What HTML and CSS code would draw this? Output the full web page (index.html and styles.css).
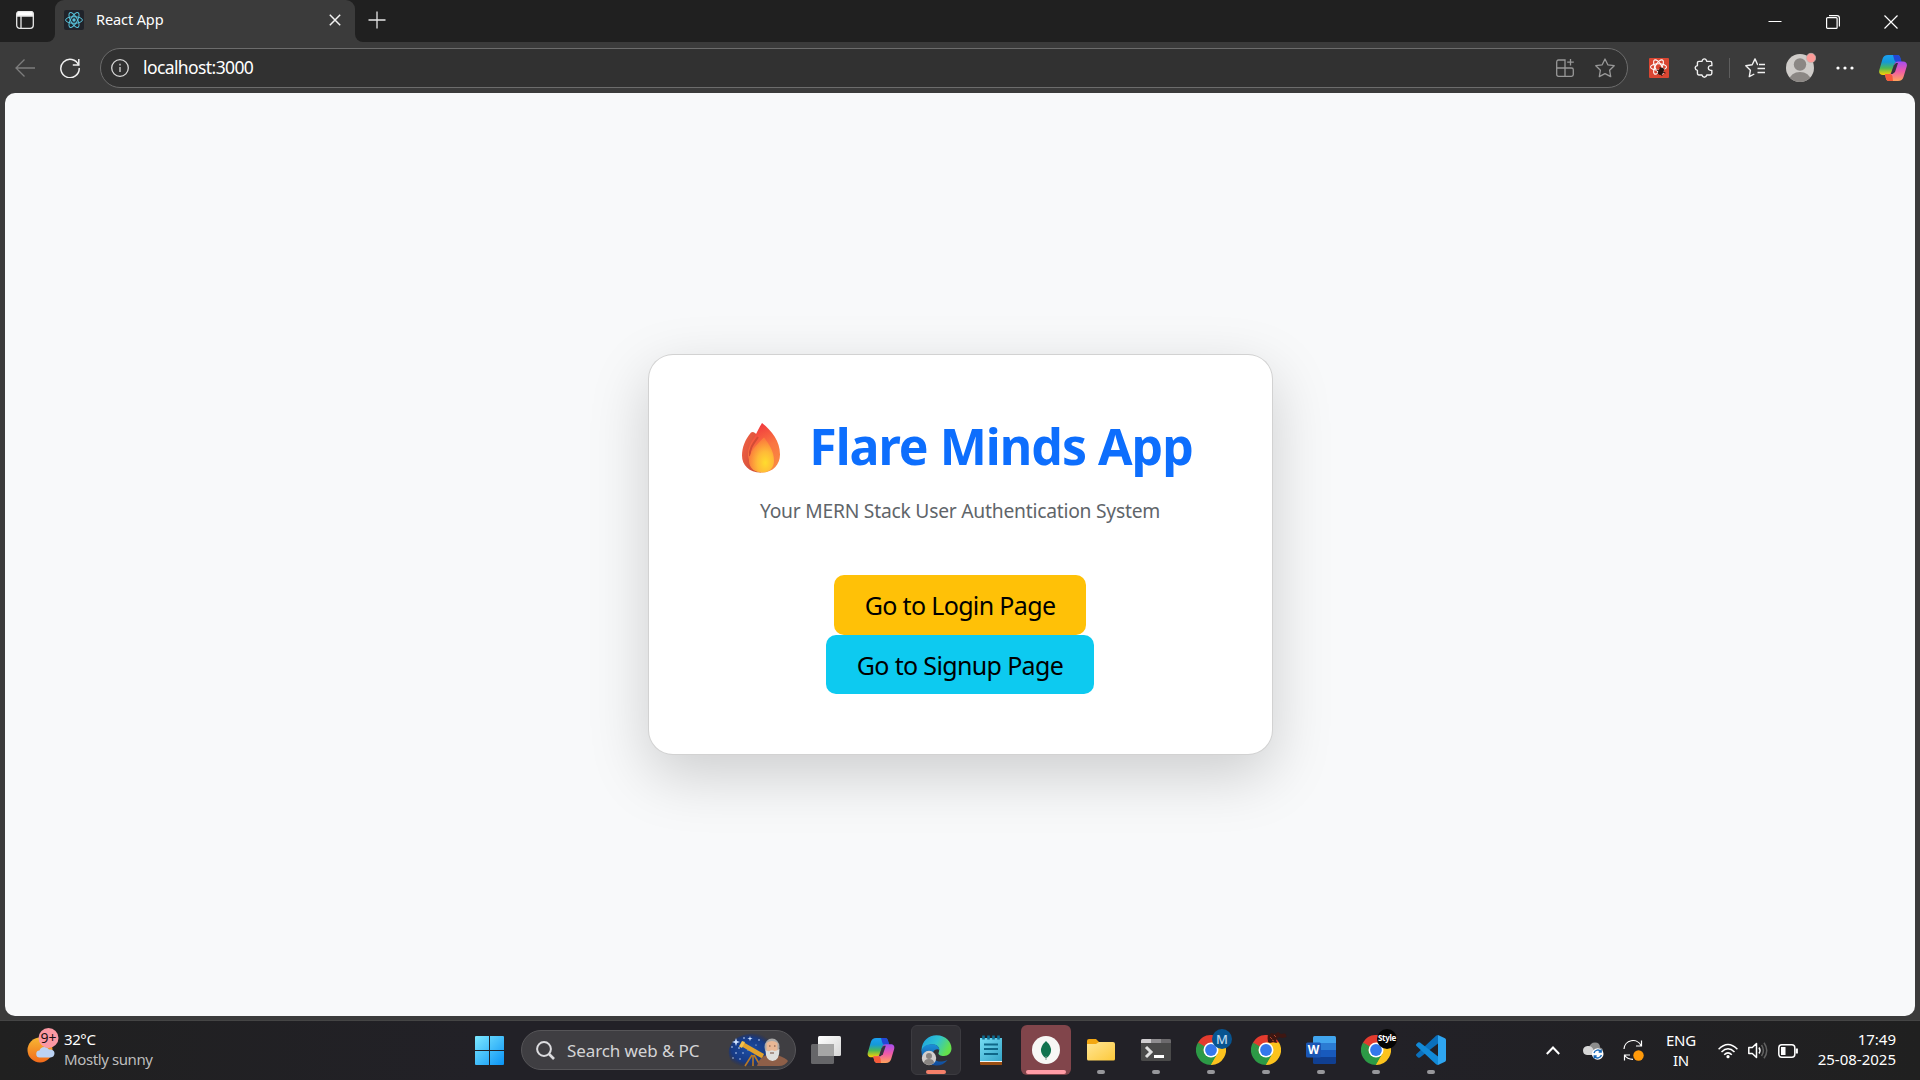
FILE: index.html
```html
<!DOCTYPE html>
<html lang="en">
<head>
<meta charset="utf-8">
<title>React App</title>
<link rel="stylesheet" href="styles.css">
</head>
<body>
<svg class="defs" width="0" height="0" aria-hidden="true">
  <defs>
    <linearGradient id="cpA" x1="0" y1="0" x2="0" y2="1"><stop offset="0" stop-color="#1ba0f2"/><stop offset=".35" stop-color="#1599d8"/><stop offset=".65" stop-color="#4cb857"/><stop offset="1" stop-color="#ffd000"/></linearGradient>
    <linearGradient id="cpB" x1="0" y1="0" x2="0" y2="1"><stop offset="0" stop-color="#a44df0"/><stop offset=".5" stop-color="#ef5aa8"/><stop offset="1" stop-color="#ffa45c"/></linearGradient>
    <linearGradient id="win" x1="0" y1="0" x2="1" y2="1"><stop offset="0" stop-color="#7ce8ff"/><stop offset="1" stop-color="#0a93f5"/></linearGradient>
    <linearGradient id="flameA" x1=".3" y1="0" x2=".6" y2="1"><stop offset="0" stop-color="#f0343f"/><stop offset=".5" stop-color="#fa7540"/><stop offset="1" stop-color="#f98b43"/></linearGradient>
    <linearGradient id="flameC" x1="0" y1="0" x2="1" y2=".6"><stop offset="0" stop-color="#f46245"/><stop offset="1" stop-color="#c94a35"/></linearGradient>
    <radialGradient id="flameB" cx=".65" cy=".72" r=".65"><stop offset="0" stop-color="#ffdc2e"/><stop offset=".5" stop-color="#ffb938"/><stop offset="1" stop-color="#fb7f3c"/></radialGradient>
    <linearGradient id="sun" x1="0" y1="0" x2="0" y2="1"><stop offset="0" stop-color="#f7b733"/><stop offset="1" stop-color="#f26a1b"/></linearGradient>
    <linearGradient id="edgeA" x1="0" y1="0" x2="1" y2=".4"><stop offset="0" stop-color="#1c9ee0"/><stop offset=".55" stop-color="#2fc3d2"/><stop offset="1" stop-color="#64e04c"/></linearGradient>
    <linearGradient id="edgeB" x1="0" y1="0" x2="0" y2="1"><stop offset="0" stop-color="#1b8fd8"/><stop offset="1" stop-color="#114a9a"/></linearGradient>
    <linearGradient id="folder" x1="0" y1="0" x2="1" y2="1"><stop offset="0" stop-color="#ffe696"/><stop offset="1" stop-color="#fdc93a"/></linearGradient>
    <linearGradient id="note" x1="0" y1="0" x2="1" y2="1"><stop offset="0" stop-color="#76dcf3"/><stop offset="1" stop-color="#35a5c8"/></linearGradient>
    <linearGradient id="taskA" x1="0" y1="0" x2="1" y2="1"><stop offset="0" stop-color="#fff"/><stop offset="1" stop-color="#d6d6d6"/></linearGradient>
    <radialGradient id="sky" cx=".45" cy=".5" r=".55"><stop offset="0" stop-color="#1c4da3"/><stop offset=".7" stop-color="#173a85"/><stop offset="1" stop-color="#1c2c63" stop-opacity="0"/></radialGradient>
    <symbol id="copilot" viewBox="0 0 28 26">
      <path d="M9 0h9c1.800 0 2.700 1.300 3.200 3l1 4h-3.500c-2 0-3.200 1.300-3.800 3.300l-2 6.700C12.300 19 11 20 9 20H4c-3 0-4.500-2-3.700-5L3.500 4C4.300 1.500 6 0 9 0z" fill="url(#cpA)"/>
      <path d="M14 0h4.500c1.700 0 2.500 1.300 3 3l1.200 4h-4c-2 0-3-.6-3.500-2.500z" fill="#2347d6"/>
      <path d="M19 26h-9c-1.800 0-2.700-1.300-3.200-3L6 19h3.500c2 0 3.200-1.300 3.800-3.300l2-6.200C16 7.500 17 6.500 19 6.500h5c3 0 4.500 2 3.700 5L24.500 22c-.8 2.500-2.500 4-5.500 4z" fill="url(#cpB)"/>
      <path d="M14 26h-4c-1.800 0-2.700-1.300-3.200-3L6 19h4c2 0 3 .6 3.500 2.500z" fill="#f65a3a"/>
      <path d="M14.800 10.500 17 8h2l-3 9-2.500 2h-1.800z" fill="#35323f"/>
    </symbol>
    <symbol id="chrome" viewBox="0 0 30 30">
      <path d="M15 15 2 7.500A15 15 0 0 1 28 7.500z" fill="#e33b2e"/>
      <path d="M15 15 28 7.500A15 15 0 0 1 15 30z" fill="#fcc31e"/>
      <path d="M15 15v15A15 15 0 0 1 2 7.500z" fill="#2c9a46"/>
      <path d="M15 7.500h13L21.500 18.800z" fill="#fcc31e"/><path d="M8.500 18.800 2 7.500 15 7.500z" fill="#e33b2e"/><path d="M2 7.500 8.500 18.800 15 15z" fill="#2c9a46"/><path d="M21.500 18.800 15 30 12 21z" fill="#2c9a46"/><path d="M21.500 18.800 15 30l8-3z" fill="#fcc31e"/>
      <circle cx="15" cy="15" r="7.500" fill="#fff"/><circle cx="15" cy="15" r="5.900" fill="#3478ec"/>
    </symbol>
  </defs>
</svg>

<div class="screen">
  <header class="tabstrip">
    <div class="strip-left">
      <svg width="18" height="18" viewBox="0 0 18 18" fill="none" stroke="#e8e8e8" stroke-width="1.300"><rect x=".7" y=".7" width="16.600" height="16.600" rx="3"/><path d="M1 2.500Q1 .7 3 .7h12q2 0 2 1.800V5H1z" fill="#fff"/><path d="M5 5v12"/></svg>
    </div>
    <div class="tab-slot">
      <div class="tab">
        <svg width="20" height="20" viewBox="0 0 20 20"><rect width="20" height="20" rx="2" fill="#20232a"/><g fill="none" stroke="#58c4dc"><ellipse cx="10" cy="10" rx="8.400" ry="3.300"/><ellipse cx="10" cy="10" rx="8.400" ry="3.300" transform="rotate(60 10 10)"/><ellipse cx="10" cy="10" rx="8.400" ry="3.300" transform="rotate(120 10 10)"/></g><circle cx="10" cy="10" r="1.700" fill="#58c4dc"/></svg>
        <span class="tab-title">React App</span>
        <svg width="12" height="12" viewBox="0 0 12 12" stroke="#f2f2f2" stroke-width="1.500"><path d="M.8.800l10.400 10.400M11.200.8.800 11.200"/></svg>
      </div>
    </div>
    <div class="strip-right">
      <svg width="18" height="18" viewBox="0 0 18 18" stroke="#e6e6e6" stroke-width="1.300"><path d="M9 .5v17M.5 9h17"/></svg>
      <div class="win-controls">
        <svg width="14" height="14" viewBox="0 0 14 14" stroke="#fff"><path d="M.5 7.500h13"/></svg>
        <svg class="restore" width="14" height="14" viewBox="0 0 14 14" fill="none" stroke="#fff" stroke-width="1.200"><rect x=".6" y="2.600" width="10.500" height="10.800" rx="1"/><path d="M3 .6h8q2.400 0 2.400 2.400v8.500"/></svg>
        <svg class="close" width="14" height="14" viewBox="0 0 14 14" stroke="#fff" stroke-width="1.200"><path d="M.5.500l13 13M13.500.5l-13 13"/></svg>
      </div>
    </div>
  </header>

  <nav class="toolbar">
    <svg width="20" height="20" viewBox="0 0 20 20" fill="none" stroke="#7d7d7d" stroke-width="1.300"><path d="M20 10H1M9.500 1.500 1 10l8.500 8.500"/></svg>
    <svg class="reload" width="20" height="20" viewBox="0 0 20 20" fill="none" stroke="#f0f0f0" stroke-width="1.500"><path d="M18.600 7.200A9.200 9.200 0 1 0 19.200 10"/><path d="M18.800 1v6h-6"/></svg>
    <div class="address">
      <svg width="18" height="18" viewBox="0 0 18 18" fill="none" stroke="#d8d8d8" stroke-width="1.300"><circle cx="9" cy="9" r="8.300"/><path d="M9 8v5M9 4.800v1.600"/></svg>
      <span class="url">localhost:3000</span>
      <svg class="apps" width="18" height="18" viewBox="0 0 18 18" fill="none" stroke="#989898" stroke-width="1.300"><path d="M9 17.300H2.500q-1.800 0-1.800-1.800v-12Q.7 1 2.500 1H9v16.300zM.7 9H15.500q1.800 0 1.800 1.800v4.700q0 1.800-1.800 1.800H9M14.500 0v6.500M11.200 3.200h6.600"/></svg>
      <svg width="20" height="20" viewBox="0 0 20 20" fill="none" stroke="#989898" stroke-width="1.300" stroke-linejoin="round"><path d="M10 1l2.800 5.800 6.400.9-4.600 4.500 1.100 6.400L10 15.600l-5.700 3 1.100-6.400L.8 7.700l6.400-.9z"/></svg>
    </div>
    <svg class="ext" width="20" height="20" viewBox="0 0 20 20"><rect width="20" height="20" rx="1" fill="#d94632"/><g fill="none" stroke="#fff" stroke-width="1.100"><ellipse cx="9.500" cy="9" rx="8" ry="3.300"/><ellipse cx="9.500" cy="9" rx="8" ry="3.300" transform="rotate(60 9.500 9)"/><ellipse cx="9.500" cy="9" rx="8" ry="3.300" transform="rotate(120 9.500 9)"/></g><ellipse cx="12" cy="13.300" rx="2.600" ry="3.800" transform="rotate(25 12 13.300)" fill="#27130f"/><path d="M7.500 12l9 3M8.500 16l7-5M11 9l2 9" stroke="#27130f"/></svg>
    <svg class="puzzle" width="20" height="20" viewBox="0 0 18.500 19" fill="none" stroke="#f0f0f0" stroke-width="1.300" stroke-linejoin="round"><path d="M4.500 3.200h2.800q.6-2.400 2.300-2.400t2.300 2.400h3.300q1.500 0 1.500 1.500v2.600h-1.400q-2 .4-2 2.200t2 2.200h1.400v2.900q0 1.500-1.500 1.500h-3.300q-.6 2.200-2.300 2.200t-2.300-2.200H4.500Q3 16.100 3 14.600v-2.900Q.9 11.300.9 9.500T3 7.300V4.700q0-1.500 1.500-1.500z"/></svg>
    <span class="divider"></span>
    <svg class="favs" width="20" height="20" viewBox="0 0 20 20" fill="none" stroke="#f0f0f0" stroke-width="1.400" stroke-linejoin="round"><path d="M13 6.600l-.5-.1L10 .9 7.200 6.700.8 7.700l4.600 4.500-1.100 6.400 5-2.600M14 6.500h6M12.500 10.500H20M12.500 14.500H20"/></svg>
    <svg class="avatar" width="30" height="30" viewBox="0 0 30 30"><clipPath id="av"><circle cx="14" cy="16" r="14"/></clipPath><g clip-path="url(#av)"><path fill="#cfccc9" d="M0 0h30v30H0z"/><circle cx="14" cy="12.500" r="6.200" fill="#8b8784"/><ellipse cx="14" cy="28" rx="10.500" ry="8" fill="#8b8784"/></g><circle cx="25" cy="6" r="4.700" fill="#fd9b98" stroke="#bdb5b2" stroke-width=".7"/></svg>
    <svg class="more" width="18" height="4" viewBox="0 0 18 4" fill="#fff"><circle cx="2" cy="2" r="1.600"/><circle cx="9" cy="2" r="1.600"/><circle cx="16" cy="2" r="1.600"/></svg>
    <svg class="copilot" width="28" height="26"><use href="#copilot"/></svg>
  </nav>

  <main class="viewport">
    <section class="card">
      <h1 class="title">
        <svg class="flame" width="38" height="50" viewBox="0 0 38 50"><path d="M9 9.500c-6 7-9 15-9 23C0 42 7 49.500 19 49.500L22 14l-8-3c-1-1.500-3-3-5-1.500z" fill="url(#flameC)"/><path d="M20 0c-3 5-5 9-7.500 14C7 22 4.500 29 7 37c3 8 8 12.500 13 12.500 11 0 18-8 18-18C38 18 30 8 20 0z" fill="url(#flameA)"/><path d="M16 14C11 21 7 26 8 33" stroke="#d34b35" stroke-width="2" fill="none"/><path d="M22 14.500C15 21 7 29 7 38c0 7 6 11.500 13 11.500S32 45 32 38c0-10-5-17-10-23.500z" fill="url(#flameB)"/></svg>
        <span>Flare Minds App</span>
      </h1>
      <p class="subtitle">Your MERN Stack User Authentication System</p>
      <a class="btn btn-login">Go to Login Page</a>
      <a class="btn btn-signup">Go to Signup Page</a>
    </section>
  </main>

  <footer class="taskbar">
    <div class="weather">
      <svg width="32" height="36" viewBox="0 0 32 36"><circle cx="13" cy="22" r="12.500" fill="url(#sun)"/><path d="M13 29.500a3.500 3.500 0 0 1-.5-7q1-3.500 5-3.500 3 0 4.500 2.500 5-.5 5.500 3.500 0 4-4 4.500z" fill="#bcd3f4"/><circle cx="21.500" cy="10" r="10" fill="#fb98a3"/><text x="21.500" y="15" text-anchor="middle" font-size="14" fill="#1d1012">9+</text></svg>
      <div class="stack"><span>32°C</span><span class="dim">Mostly sunny</span></div>
    </div>

    <div class="apps-row">
      <svg class="start" width="29" height="29" viewBox="0 0 29 29" fill="url(#win)"><path d="M1 0h13v14H0V1q0-1 1-1zM15 0h13q1 0 1 1v13H15zM0 15h14v14H1q-1 0-1-1zM15 15h14v13q0 1-1 1H15z"/></svg>
      <div class="search">
        <svg width="19" height="19" viewBox="0 0 19 19" fill="none" stroke="#dcdcdf"><circle cx="8" cy="8" r="6.900" stroke-width="2"/><path d="M13 13l5 5" stroke-width="2.600"/></svg>
        <span class="search-text">Search web &amp; PC</span>
        <svg width="60" height="34" viewBox="0 0 60 34"><path d="M1 22C-1 12 8 2 20 1c14-2 24 4 26 8v24H8Q2 30 1 22z" fill="url(#sky)"/><g fill="#cfe2ff"><path d="M8 5l1 3 3 1-3 1-1 3-1-3-3-1 3-1zM22 3l.6 2 2 .6-2 .6-.6 2-.6-2-2-.6 2-.6z"/><circle cx="16" cy="5" r=".8"/><circle cx="4" cy="14" r=".8"/><circle cx="11" cy="15" r=".8"/><circle cx="8" cy="20" r=".8"/><circle cx="15" cy="20" r=".7"/><circle cx="12" cy="26" r=".7"/><circle cx="31" cy="7" r=".8"/><circle cx="28" cy="12" r=".6"/><circle cx="20" cy="17" r=".6"/><circle cx="5" cy="25" r=".7"/></g><path d="M24 22l-7 11M25 22v11M26 22l6 10" stroke="#b97924" stroke-width="1.600"/><path d="M15 9l21 12-2 4.500L13 13z" fill="#e2a22d"/><path d="M14 8l3 1-3 6-3-1.500z" fill="#f5c14a"/><path d="M29 33q3-10 10-11h10q9 3 11 6-3 5-9 5z" fill="#8e5f48"/><ellipse cx="44" cy="14" rx="7.500" ry="8.500" fill="#aaa9a8"/><path d="M38.500 10q5.500-4 11 0v9h-11z" fill="#e9b795"/><path d="M37.500 17q2 1.500 4 1 2.500-1.500 5 0 2 0 5-2 0 12-7 12t-7-11z" fill="#dededc"/><path d="M42 20h4M41 13h1.500M46 13h1.500" stroke="#70483a"/></svg>
      </div>
      <div class="app"><svg width="30" height="28" viewBox="0 0 30 28"><rect x="0" y="8" width="23" height="20" rx="1.500" fill="#666669"/><rect x="7" y="0" width="23" height="20" rx="1.500" fill="url(#taskA)"/><path d="M7 8h16v12H8.500Q7 20 7 18.500z" fill="#a6a6a6"/></svg></div>
      <div class="app"><svg width="28" height="25"><use href="#copilot" width="28" height="25"/></svg></div>
      <div class="app app-active"><svg width="31" height="31" viewBox="0 0 31 31"><path d="M.5 15C1 6 7.500.3 15.500.3 25 .3 30.500 7 30.500 13.500c0 4.500-3.500 7.500-7.500 7.500s-6-1.600-5.500-3C19 15 18.500 9.500 12 9.500 6 9.500 1.500 12 .5 17z" fill="url(#edgeA)"/><path d="M.5 17C1 11 6 9.300 11.500 9.300c4 0 7 2.700 7 6-2.500-3-7.500.5-7 5.200.5 5 6 8 15 4.500Q22 30.700 15 30.500 1 29.500.5 17z" fill="url(#edgeB)"/><circle cx="8" cy="23" r="7.200" fill="#d2cfcd"/><circle cx="8" cy="21" r="3" fill="#888481"/><path d="M3 28q0-4 5-4t5 4q-5 4-10 0z" fill="#888481"/></svg><i class="bar bar-edge"></i></div>
      <div class="app"><svg width="22" height="30" viewBox="0 0 22 30"><path d="M0 25h22v5H1q-1 0-1-1z" fill="#9a4e12"/><path d="M0 24h22v3H0z" fill="#f3f3f3"/><path d="M0 3h22v23H0z" fill="url(#note)"/><path d="M4 9.500h14M4 14h14M4 19h14" stroke="#0f6788" stroke-width="2"/><path d="M3.500.500v4M8.500.500v4M13.500.500v4M18.500.500v4" stroke="#0e6f94" stroke-width="2.600"/></svg></div>
      <div class="app app-mongo"><svg width="28" height="28" viewBox="0 0 28 28"><circle cx="14" cy="14" r="14" fill="#f7f7f5"/><path d="M14 5q5.500 5 5 10-.5 4-4.500 7h-1q-4-3-4.500-7-.5-5 5-10z" fill="#12734f"/><path d="M14 20v4" stroke="#7c9b8c"/></svg><i class="bar bar-mongo"></i></div>
      <div class="app"><svg width="28" height="22" viewBox="0 0 28 22"><path d="M0 2q0-2 2-2h7l3 3v4H0z" fill="#f3a712"/><path d="M0 5h9l3-2h14q2 0 2 2v15q0 1.500-1.500 1.500h-25Q0 21.500 0 20z" fill="url(#folder)"/></svg><i class="bar"></i></div>
      <div class="app"><svg width="30" height="22" viewBox="0 0 30 22"><rect width="30" height="22" rx="1.500" fill="#4a4a4a"/><path d="M0 4V1.500Q0 0 1.500 0H10v4z" fill="#d0cdd0"/><path d="M10 0h10v4H10z" fill="#8f8d90"/><path d="M20 0h8.500Q30 0 30 1.500V4H20z" fill="#6c6a6d"/><path d="M5 8l5 5-5 5" fill="none" stroke="#e0e0e0" stroke-width="3"/><path d="M13 17.500h10" stroke="#fff" stroke-width="3"/></svg><i class="bar"></i></div>
      <div class="app"><svg width="30" height="30"><use href="#chrome"/></svg><b class="badge badge-m">M</b><i class="bar"></i></div>
      <div class="app"><svg width="30" height="30"><use href="#chrome"/></svg><svg class="badge" width="20" height="20" viewBox="0 0 20 20"><path d="M0 5l3 1 1-2 4 1 3-2 3 2 6-1v4l-5 1-3-1-3 3 1 3-4-1-3 1-2-1z" fill="#3e1712"/><path d="M3 8l2 2M7 6l2 2M5 11l2 1" stroke="#b0462c"/></svg><i class="bar"></i></div>
      <div class="app"><svg width="30" height="28" viewBox="0 0 30 28"><path d="M7 7V1.500Q7 0 8.500 0h20Q30 0 30 1.500V7z" fill="#41a5ee"/><path d="M7 7h23v7H7z" fill="#2b7cd3"/><path d="M7 14h23v7H7z" fill="#185abd"/><path d="M7 21h23v5.500q0 1.500-1.500 1.500h-20Q7 28 7 26.500z" fill="#103f91"/><rect y="6.500" width="15" height="15" rx="1.500" fill="#1a56b4"/><text x="7.500" y="18.300" text-anchor="middle" font-size="12" font-weight="700" fill="#fff">W</text></svg><i class="bar"></i></div>
      <div class="app"><svg width="30" height="30"><use href="#chrome"/></svg><b class="badge badge-style">Style</b><i class="bar"></i></div>
      <div class="app"><svg width="30" height="30" viewBox="0 0 30 30"><path d="M22 0l7 3.300q1 .5 1 1.700v20q0 1.200-1 1.700L22 30z" fill="#2ea5f0"/><path d="M22 0v8.500L4 22.500q-1 .7-2 0L.5 21q-1-1 0-2L20 .8q1-.8 2-.8z" fill="#0b70bc"/><path d="M22 30v-8.500L4 7.500q-1-.7-2 0L.5 9q-1 1 0 2L20 29.200q1 .8 2 .8z" fill="#128ad8"/></svg><i class="bar"></i></div>
    </div>

    <div class="tray">
      <svg class="chev" width="14" height="9" viewBox="0 0 14 9" fill="none" stroke="#fff" stroke-width="2"><path d="M.8 8 7 1.500 13.200 8"/></svg>
      <svg class="cloud" width="21" height="18" viewBox="0 0 21 18"><path d="M6 6Q7 .5 12 .5t5 5q3 .5 3 4l-9 3z" fill="#8c8c8c"/><path d="M4 13q-4-.5-4-4.500T4.500 4Q9 3.500 10.500 8l4 5z" fill="#d6d6d6"/><circle cx="14.700" cy="12" r="5.800" fill="#fff"/><path d="M11 11a4 4 0 0 1 7-1.500M18.400 13a4 4 0 0 1-7 1.500M18.200 7.500v2.500h-2.500M11.200 16.500V14h2.500" fill="none" stroke="#1668b8" stroke-width="1.300"/></svg>
      <svg class="sync" width="21" height="21" viewBox="0 0 21 21" fill="none" stroke="#fff" stroke-width="1.200"><path d="M1 9A9 9 0 0 1 18 5.500M18.500.5v5.500H13M10 19.300q-6 0-8.500-4.300M1.500 20.500V15H7"/><circle cx="15.500" cy="15.500" r="5.200" fill="#ff9a0a" stroke="none"/></svg>
      <div class="stack lang"><span>ENG</span><span>IN</span></div>
      <svg class="wifi" width="20" height="16" viewBox="0 0 20 16" fill="none" stroke="#fff" stroke-width="1.500"><path d="M.6 6.300q9.400-9.500 18.800 0M3.500 9q6.500-6.500 13 0M6.200 11.700q3.800-3.700 7.600 0"/><circle cx="10" cy="13.700" r="1.600" fill="#fff" stroke="none"/></svg>
      <svg class="sound" width="20" height="17" viewBox="0 0 20 17" fill="none" stroke="#fff" stroke-width="1.500"><path d="M.8 5.500h3.500L8.500 1.500v14l-4.200-4H.8z" stroke-linejoin="round"/><path d="M11 5.500q2 3 0 6"/><path d="M13.500 3q3.800 5.500 0 11M16 .7q5.500 7.800 0 15.600" stroke="#626262"/></svg>
      <svg class="battery" width="20" height="14" viewBox="0 0 20 14" fill="none" stroke="#fff" stroke-width="1.500"><rect x=".8" y=".8" width="16" height="12.400" rx="3"/><path d="M18.800 4.500v5" stroke-width="2.200"/><path d="M3 3h4.500v8H3z" fill="#fff" stroke="none"/></svg>
      <div class="stack clock"><span>17:49</span><span>25-08-2025</span></div>
    </div>
  </footer>
</div>
</body>
</html>
```
FILE: styles.css
```css
* { box-sizing: border-box; }
body {
  margin: 0;
  font-family: "Noto Sans", "Open Sans", sans-serif;
  background: #3b3b3b;
  overflow: hidden;
}
svg { display: block; flex: none; }
.defs { position: absolute; }

.screen { display: flex; flex-direction: column; width: 1920px; height: 1080px; white-space: nowrap; }

/* Tab strip */
.tabstrip { display: flex; height: 42px; color: #fff; }
.strip-left { width: 55px; padding: 11px 0 0 16px; background: #202020; border-bottom-right-radius: 8px; }
.tab-slot { width: 300px; background: linear-gradient(#202020 50%, #3b3b3b 50%); }
.tab { display: flex; align-items: center; height: 42px; padding: 0 14px 2px 9px; background: #3b3b3b; border-radius: 9px 9px 0 0; }
.tab-title { flex: 1; padding: 0 0 2px 12px; font-size: 14.500px; letter-spacing: -.1px; }
.strip-right { flex: 1; display: flex; align-items: flex-start; justify-content: space-between; padding: 11px 22px 0 13px; background: #202020; border-bottom-left-radius: 8px; }
.win-controls { display: flex; align-items: center; gap: 44px; padding-top: 1px; }
.win-controls .restore, .win-controls .close { margin-top: 3px; }

/* Toolbar */
.toolbar { display: flex; align-items: center; height: 51px; padding: 1px 13px 0 15px; }
.reload { margin-left: 25px; }
.address { display: flex; align-items: center; width: 1528px; height: 40px; margin-left: 20px; padding: 0 12px 0 10px; border: 1px solid #6c6c6c; border-radius: 20px; background: #313131; color: #fff; }
.url { flex: 1; padding: 0 0 2px 14px; font-size: 17.500px; letter-spacing: -.6px; }
.apps { margin-right: 21px; }
.ext { margin-left: 21px; }
.puzzle { margin-left: 25px; }
.divider { width: 1px; height: 20px; margin-left: 15px; background: #5e5e5e; }
.favs { margin-left: 15px; }
.avatar { margin: -3px 0 0 21px; }
.more { margin-left: 20px; }
.copilot { margin-left: auto; }

/* Page */
.viewport { display: flex; align-items: center; justify-content: center; height: 923px; margin: 0 5px; border-radius: 10px; background: #f8f9fa; }
.card { display: flex; flex-direction: column; align-items: center; width: 625px; height: 401px; padding-top: 59px; border: 1px solid rgba(0, 0, 0, .175); border-radius: 25px; background: #fff; box-shadow: 0 20px 60px rgba(0, 0, 0, .175); }
.title { display: flex; align-items: center; justify-content: center; gap: 29px; height: 64px; margin: 0; padding-left: 15px; color: #0d6efd; font-size: 50px; font-weight: 700; line-height: 64px; letter-spacing: -1px; }
.flame { margin-top: 3px; }
.subtitle { margin: 19px 0 50px; color: #5f656a; font-size: 19.250px; line-height: 28px; letter-spacing: -.23px; }
.btn { display: flex; align-items: center; justify-content: center; height: 60px; border-radius: 10px; color: #000; font-size: 25px; letter-spacing: -.65px; }
.btn-login { width: 252px; background: #ffc107; }
.btn-signup { width: 268px; height: 59px; background: #0dcaf0; }

/* Taskbar */
.taskbar { display: flex; height: 60px; margin-top: 4px; background: linear-gradient(90deg, #202020, #222127 25%, #222127 72%, #202020); border-top: 1px solid #454545; color: #fff; font-size: 15px; }
.weather { display: flex; align-items: flex-start; width: 475px; padding: 7px 0 0 27px; }
.weather .stack { margin: 1px 0 0 5px; letter-spacing: -.4px; }
.stack { display: flex; flex-direction: column; line-height: 20px; }
.dim { color: #bdbdbd; }
.apps-row { display: flex; align-items: flex-start; padding-top: 4px; }
.start { margin-top: 11px; }
.search { display: flex; align-items: center; width: 275px; height: 40px; margin: 5px 5px 0 17px; padding: 0 7px 0 14px; border: 1px solid #565558; border-radius: 20px; background: #3f3e42; color: #d4d4d6; font-size: 17px; letter-spacing: -.1px; }
.search-text { flex: 1; padding-left: 12px; }
.app { position: relative; display: flex; align-items: center; justify-content: center; width: 50px; height: 50px; margin-right: 5px; border-radius: 6px; }
.app-active { background: #313035; border: 1px solid #3c3b40; }
.app-mongo { background: #81454b; }
.bar { position: absolute; left: 50%; bottom: 1px; width: 8px; height: 4px; border-radius: 2px; background: #97979b; transform: translateX(-50%); }
.bar-edge { width: 20px; bottom: 0; background: #f4806a; }
.bar-mongo { width: 40px; background: #ff9ca6; }
.badge { position: absolute; left: 26px; top: 4px; width: 20px; height: 20px; border-radius: 50%; text-align: center; }
.badge-m { background: #075490; color: #b9d7ee; font-size: 13px; font-weight: 500; line-height: 20px; }
.badge-style { background: #050505; color: #fff; font-size: 8px; line-height: 17px; letter-spacing: -.3px; }
.tray { display: flex; align-items: center; margin-left: auto; padding: 0 24px 0 0; }
.cloud { margin-left: 23px; }
.sync { margin-left: 19px; }
.lang { width: 60px; margin: -1px 0 0 7px; align-items: center; letter-spacing: -.2px; }
.wifi { margin-left: 7px; }
.sound { margin-left: 10px; }
.battery { margin-left: 10px; }
.clock { width: 98px; margin-top: -3px; align-items: flex-end; }
```
